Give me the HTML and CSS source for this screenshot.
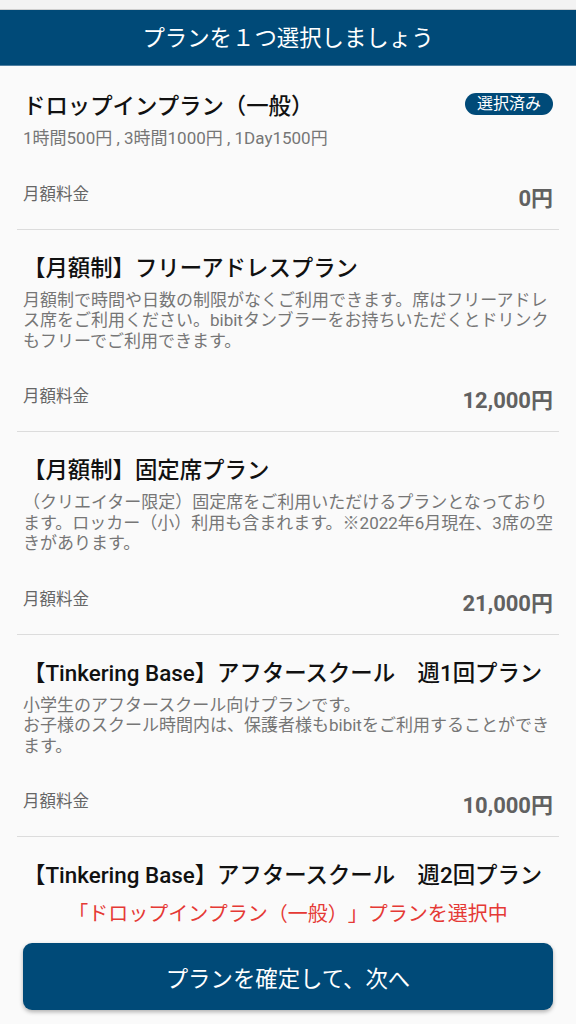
FILE: index.html
```html
<!DOCTYPE html>
<html lang="ja">
<head>
<meta charset="utf-8">
<title>プラン選択</title>
<link rel="stylesheet" href="styles.css">
</head>
<body>
<div class="app">
  <div class="statusbar"></div>
  <header class="header">プランを１つ選択しましょう</header>
  <main class="list">
    <section class="plan">
      <div class="plan-head">
        <h2 class="plan-title">ドロップインプラン（一般）</h2>
        <span class="badge">選択済み</span>
      </div>
      <p class="plan-desc">1時間500円 , 3時間1000円 , 1Day1500円</p>
      <div class="price-row"><span class="price-label">月額料金</span><span class="price">0円</span></div>
    </section>
    <section class="plan">
      <div class="plan-head">
        <h2 class="plan-title">【月額制】フリーアドレスプラン</h2>
      </div>
      <p class="plan-desc">月額制で時間や日数の制限がなくご利用できます。席はフリーアドレス席をご利用ください。bibitタンブラーをお持ちいただくとドリンクもフリーでご利用できます。</p>
      <div class="price-row"><span class="price-label">月額料金</span><span class="price">12,000円</span></div>
    </section>
    <section class="plan">
      <div class="plan-head">
        <h2 class="plan-title">【月額制】固定席プラン</h2>
      </div>
      <p class="plan-desc">（クリエイター限定）固定席をご利用いただけるプランとなっております。ロッカー（小）利用も含まれます。※2022年6月現在、3席の空きがあります。</p>
      <div class="price-row"><span class="price-label">月額料金</span><span class="price">21,000円</span></div>
    </section>
    <section class="plan">
      <div class="plan-head">
        <h2 class="plan-title">【Tinkering Base】アフタースクール　週1回プラン</h2>
      </div>
      <p class="plan-desc">小学生のアフタースクール向けプランです。<br>お子様のスクール時間内は、保護者様もbibitをご利用することができます。</p>
      <div class="price-row"><span class="price-label">月額料金</span><span class="price">10,000円</span></div>
    </section>
    <section class="plan plan-last">
      <div class="plan-head">
        <h2 class="plan-title">【Tinkering Base】アフタースクール　週2回プラン</h2>
      </div>
    </section>
  </main>
  <footer class="footer">
    <p class="selected-note">「ドロップインプラン（一般）」プランを選択中</p>
    <button class="next-btn" type="button">プランを確定して、次へ</button>
  </footer>
</div>
</body>
</html>
```

FILE: styles.css
```css
* { box-sizing: border-box; }
html, body {
  margin: 0;
  padding: 0;
  background: #fafafa;
}
body {
  font-family: "Roboto", "Noto Sans CJK JP", sans-serif;
  color: #212121;
  text-spacing-trim: space-all;
}
.app {
  width: 576px;
  height: 1024px;
  display: flex;
  flex-direction: column;
  overflow: hidden;
}
.statusbar {
  height: 10px;
  flex: none;
  background: #f3f3f3;
  border-bottom: 1px solid #cfcfcf;
}
.header {
  flex: none;
  height: 56px;
  background: #004a78;
  color: #fff;
  font-size: 22.4px;
  line-height: 56px;
  text-align: center;
  border-bottom: 1px solid #4f7fa0;
}
.list {
  flex: 1;
  min-height: 0;
  overflow: hidden;
  padding: 2px 17px 0;
}
.plan {
  padding: 25px 6px 16px;
  border-bottom: 1px solid #dcdcdc;
}
.plan-last {
  border-bottom: none;
  padding-bottom: 0;
}
.plan-head {
  display: flex;
  justify-content: space-between;
  align-items: flex-start;
}
.plan-title {
  margin: 0;
  font-size: 22.4px;
  line-height: 26px;
  font-weight: 500;
  color: #111;
}
.badge {
  flex: none;
  margin-top: 0;
  background: #004a78;
  color: #fff;
  font-size: 16px;
  line-height: 22px;
  padding: 0 12px;
  border-radius: 11px;
}
.plan-desc {
  margin: 9px 0 0;
  font-size: 17px;
  line-height: 20.5px;
  color: #767676;
}
.price-row {
  margin-top: 36px;
  display: flex;
  justify-content: space-between;
  align-items: flex-start;
  height: 28px;
}
.price-label {
  font-size: 16.5px;
  line-height: 20px;
  color: #666;
}
.price {
  font-size: 22px;
  line-height: 28px;
  font-weight: 700;
  color: #616161;
}
.footer {
  flex: none;
  height: 129px;
  background: #fafafa;
  padding: 6px 23px 14px;
  display: flex;
  flex-direction: column;
  align-items: stretch;
}
.selected-note {
  margin: 0;
  text-align: center;
  font-size: 20px;
  line-height: 26px;
  color: #e53935;
}
.next-btn {
  margin-top: 16px;
  height: 67px;
  border: none;
  border-radius: 9px;
  background: #004a78;
  color: #fff;
  font-family: inherit;
  font-size: 22.4px;
  box-shadow: 0 2px 4px rgba(0, 0, 0, 0.3);
}
```
